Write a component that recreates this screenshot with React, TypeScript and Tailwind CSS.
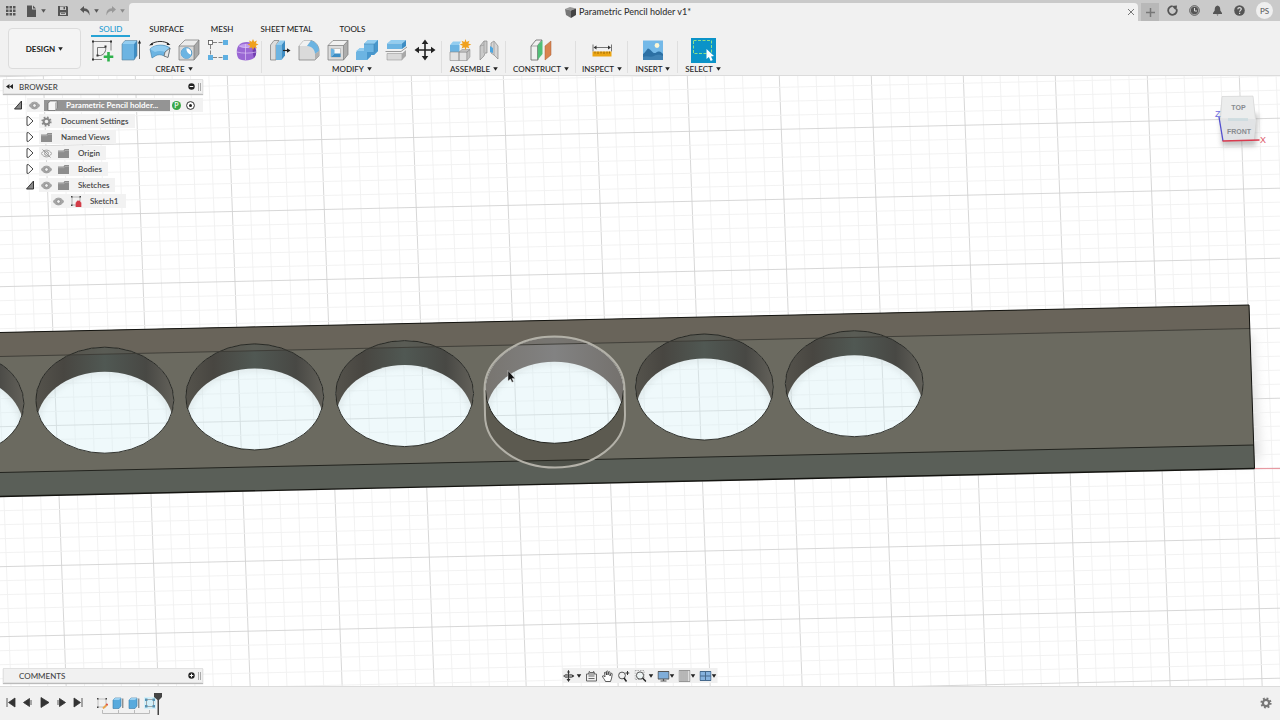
import { useState, type ReactNode } from "react";

const tabs = ["SOLID", "SURFACE", "MESH", "SHEET METAL", "TOOLS"];

function Icon({ children, className = "w-6 h-6", box = 24 }: { children: ReactNode; className?: string; box?: number }) {
  return (
    <svg viewBox={`0 0 ${box} ${box}`} className={`shrink-0 ${className}`} fill="none" aria-hidden="true">
      {children}
    </svg>
  );
}

function Caret({ className = "text-[#222]" }: { className?: string }) {
  return (
    <svg viewBox="0 0 5 4" className={`w-[5px] h-1 shrink-0 ${className}`} aria-hidden="true">
      <path d="M0.2 0.3h4.6L2.5 3.8z" fill="currentColor" />
    </svg>
  );
}

function Gear({ className }: { className: string }) {
  return (
    <Icon className={className} box={12}>
      <circle cx="6" cy="6" r="3.100" stroke="currentColor" strokeWidth="2.200" />
      <circle cx="6" cy="6" r="4.600" stroke="currentColor" strokeWidth="2" strokeDasharray="1.806 1.806" />
    </Icon>
  );
}

const BLUE = "#6cb4e2";
const DEEP = "#3d8dc4";
const LIGHT = "#93cdf0";

const icons: Record<string, ReactNode> = {
  sketch: (
    <Icon>
      <path d="M3 3.5h18M3 3.5v18M21 3.5v9M3 21.500h9" stroke="#666" strokeWidth="0.8" />
      <path d="M7.500 17.500v-8h8M7.500 17.500h3c4-1 6-5 5-9" stroke="#555" strokeWidth="0.8" />
      <path d="M2 2.500h2v2H2zM20 2.500h2v2h-2zM2 20.500h2v2H2zM6.500 16.500h2v2h-2zM14.500 7.500h2v2h-2z" fill="#333" />
      <path d="M18.500 14v9.500M13.700 18.700h9.600" stroke="#2fb24c" strokeWidth="2.600" />
    </Icon>
  ),
  extrude: (
    <Icon>
      <path d="M3 6l3-3.500h12l-3 3.500z" fill={LIGHT} />
      <path d="M15 6l3-3.500v15L15 22z" fill={DEEP} />
      <path d="M3 6h12v16H3z" fill={BLUE} />
      <path d="M3 22V6l3-3.500h12v15L15 22z" stroke="#5b7f99" strokeWidth="0.600" />
      <path d="M20.500 21V4" stroke="#555" strokeWidth="0.900" />
      <path d="M20.500 2L19 5.500h3z" fill="#222" />
    </Icon>
  ),
  revolve: (
    <Icon>
      <path d="M2 11C7 6 17 6 22 10l-2 9-5-1.500c-2-1-5-1-7 0L4 20z" fill={BLUE} stroke="#3b7ca8" strokeWidth="0.600" />
      <path d="M2 11c5-4.500 15-4.500 19.500-.5L17 14c-3-1.500-7-1.500-10 0z" fill={LIGHT} />
      <path d="M17 14l5-4-2 9.500-4-1.500z" fill="#e6e6e6" stroke="#555" strokeWidth="0.700" />
      <path d="M2.500 6.500C8 2.500 16 2.500 21 6" stroke="#333" strokeWidth="1" />
      <path d="M1 7.500l3.500-3 .5 2.500zM22.500 7l-3.500-2.500-.2 2.400z" fill="#222" />
    </Icon>
  ),
  hole: (
    <Icon>
      <path d="M2 8l6-6h14l-5 6z" fill="#ececec" />
      <path d="M17 8l5-6v14l-5 6z" fill="#a9a9a9" />
      <path d="M2 8h15v14H2z" fill="#d8d8d8" />
      <path d="M2 22V8l6-6h14v14l-5 6zM2 8h15v14M17 8l5-6" stroke="#777" strokeWidth="0.700" />
      <circle cx="9.500" cy="15" r="5.300" fill="#fff" stroke="#3d8dc4" strokeWidth="0.900" />
      <path d="M9.500 9.700a5.300 5.300 0 1 0 5 7c-3-.5-5.500-3-5-7z" fill={BLUE} />
    </Icon>
  ),
  pattern: (
    <Icon>
      <path d="M4.500 7v10M7 4.500h10M7 19.500h10" stroke="#777" strokeWidth="0.900" strokeDasharray="4 1.500" />
      <rect x="2.500" y="2.500" width="4" height="4" fill="#fff" stroke="#555" strokeWidth="0.800" />
      <path d="M17 2h5v5h-5zM2 17h5v5H2zM17 17h5v5h-5z" fill="#5fb0e2" />
    </Icon>
  ),
  form: (
    <Icon>
      <path d="M4 7c3-4 13-4 15 0 3 3 3 9 0 13-3 3-12 3-15 1C1 18 1 10 4 7z" fill="#9a67d4" />
      <path d="M4 8c3-3 12-3 14 0-3 2-10 3-14 0z" fill="#c19bee" />
      <path d="M18 8c4 3 4 9 1 12-1-3-2-9-1-12z" fill="#713db0" />
      <path d="M2 14c5 1.500 13 1.500 19 0M10.500 6v16M4 8c4 2 10 2 14 0" stroke="#dcc6f5" strokeWidth="0.700" />
      <path d="M18 1l1.200 2.800L22 2.500 20.800 5.300 23.500 6.500l-2.700 1.200L22 10.500l-2.800-1.200L18 12l-1.200-2.700L14 10.500l1.200-2.800L12.500 6.500l2.700-1.200L14 2.500l2.800 1.300z" fill="#f0a11e" />
    </Icon>
  ),
  pressPull: (
    <Icon>
      <path d="M2.500 7L6 2.500h5L8 7v15H2.500z" fill="#ddd" stroke="#777" strokeWidth="0.700" />
      <path d="M8 7l4-4.500h5L13.500 7z" fill={LIGHT} />
      <path d="M8 7h5.500v15H8z" fill={BLUE} />
      <path d="M13.500 7L17 2.500v15L13.500 22z" fill={DEEP} />
      <path d="M15 12.500h5" stroke="#222" strokeWidth="1.200" />
      <path d="M19 10.300l3.500 2.200-3.500 2.200z" fill="#222" />
    </Icon>
  ),
  fillet: (
    <Icon>
      <path d="M2 8l5-5.500h7C19 4 22 8 22 13v5l-4 4H2z" fill="#dadada" stroke="#777" strokeWidth="0.700" />
      <path d="M2 8h8l4-5.500H7z" fill="#f1f1f1" />
      <path d="M10 8l4-5.500C19 4 22 8 22 13l-4 3c0-4-3-8-8-8z" fill={BLUE} />
      <path d="M18 16l4-3v5l-4 4z" fill="#b0b0b0" />
    </Icon>
  ),
  shell: (
    <Icon>
      <path d="M2 7.500L7 2.500h15l-4.500 5z" fill="#f1f1f1" />
      <path d="M17.500 7.500l4.500-5v14L17.500 22z" fill="#adadad" />
      <path d="M2 7.500h15.500V22H2z" fill="#dcdcdc" />
      <path d="M2 22V7.500l5-5h15v14L17.500 22zM2 7.500h15.500V22M17.500 7.500l4.500-5" stroke="#777" strokeWidth="0.700" />
      <path d="M5 10.500h9.500V19H5z" fill="#f9f9f9" stroke="#999" strokeWidth="0.500" />
      <path d="M5 10.500l3.500 1V15.500L5 19z" fill={BLUE} />
      <path d="M5 19l3.500-3.500h6V19z" fill={DEEP} />
    </Icon>
  ),
  combine: (
    <Icon>
      <path d="M9 6l4-4h10v11l-4 4H9z" fill={BLUE} />
      <path d="M1 14l4-4h11v8l-4 4H1z" fill={BLUE} />
      <path d="M9 6l4-4h10l-4 4zM1 13l4-3h4v3z" fill={LIGHT} />
      <path d="M19 6l4-4v11l-4 4h-3v1l-4 4v-8h7z" fill="#4997cc" />
      <path d="M9 6h10v8" stroke="#3b7ca8" strokeWidth="0.500" />
    </Icon>
  ),
  split: (
    <Icon>
      <path d="M3 5.500L7 2h15l-4 3.500z" fill={LIGHT} />
      <path d="M3 5.500h15V11H3z" fill={BLUE} />
      <path d="M18 5.500L22 2v6l-4 3z" fill={DEEP} />
      <path d="M3 15.500h15V22H3z" fill="#d9d9d9" stroke="#888" strokeWidth="0.500" />
      <path d="M18 15.500l4-3.500v6L18 22z" fill="#a9a9a9" />
      <path d="M1.500 13.500h15.500l6-4.500" stroke="#999" strokeWidth="1" />
    </Icon>
  ),
  move: (
    <Icon>
      <path d="M12 4v16M4 12h16" stroke="#222" strokeWidth="1.600" />
      <path d="M12 1.500L15.300 6H8.700zM12 22.500l3.300-4.500H8.700zM1.500 12L6 8.700v6.600zM22.500 12L18 8.700v6.600z" fill="#222" />
    </Icon>
  ),
  component: (
    <Icon>
      <path d="M2 7l3-3.500h8L11 7z" fill={LIGHT} />
      <path d="M2 7h9.500v7H2z" fill={BLUE} />
      <path d="M2 14h9v8.500H2zM11 14h8v8.500h-8z" fill="#e3e3e3" stroke="#888" strokeWidth="0.600" />
      <path d="M11 14l3-2.500h8L19 14zM19 14l3-2.500V19l-3 3.500z" fill="#c2c2c2" stroke="#888" strokeWidth="0.500" />
      <path d="M17.500 1l1 3L21.500 2.800 20.300 5.500l3 1-3 1.200 1.200 2.800-3-1.200-1 3-1-3-3 1.200 1.200-2.800-3-1.200 3-1-1.200-2.700 3 1.200z" fill="#f0a11e" />
    </Icon>
  ),
  joint: (
    <Icon>
      <path d="M3 8l4-5h3v12H8l-1 3-4 4z" fill="#c9c9c9" stroke="#888" strokeWidth="0.700" />
      <path d="M7 3v12M3 8l4-1" stroke="#999" strokeWidth="0.700" />
      <path d="M21 8l-4-5-3 2v10l3 2 4 4z" fill="#d5d5d5" stroke="#888" strokeWidth="0.700" />
      <path d="M13 8l3 2v5l-3-1z" fill="#4fa6df" />
      <path d="M17 4v13" stroke="#999" strokeWidth="0.700" />
    </Icon>
  ),
  plane: (
    <Icon>
      <path d="M2 8l5-6h6l-4 5v15H2z" fill="#f0f0f0" stroke="#666" strokeWidth="0.800" />
      <path d="M8.500 7.500L13.500 2v14l-5 6z" fill="#51bf77" />
      <path d="M2 8h6.500v14" stroke="#777" strokeWidth="0.600" />
      <path d="M16 8l6-5v14l-6 5z" fill="#d9834f" stroke="#a75e34" strokeWidth="0.500" />
    </Icon>
  ),
  ruler: (
    <Icon>
      <path d="M3 6.500v7M21.500 6.500v7M5 9.500h15" stroke="#555" strokeWidth="0.800" />
      <path d="M3.500 9.500l3-2v4zM21 9.500l-3-2v4z" fill="#333" />
      <path d="M2.500 13.500h19v5h-19z" fill="#eba513" />
      <path d="M5 13.500v2M8 13.500v2.500M11 13.500v2M14 13.500v2.500M17 13.500v2M19.500 13.500v2" stroke="#8a5a00" strokeWidth="0.800" />
    </Icon>
  ),
  picture: (
    <Icon>
      <path d="M2 2.500h20v19.500H2z" fill="#74b9e8" />
      <path d="M2 16c2-1 4-5 5-5.500 2 0 4 4 6 4.500 2 .5 3-2 5-1.500 2 0 3 1.500 4 2.500v6H2z" fill="#2c70a4" />
      <path d="M2 19c4-2 7 1 11-1s6-1 9 0v4H2z" fill="#3f82b4" />
      <circle cx="16" cy="7.500" r="2.400" fill="#fdf6d4" />
    </Icon>
  ),
  select: (
    <Icon className="w-[25px] h-[25px]" box={25}>
      <path d="M0 0h25v25H0z" fill="#0b93c8" />
      <path d="M2.500 2.500h18v13h-18z" stroke="#8ce08a" strokeWidth="1" strokeDasharray="3 1.500" />
      <path d="M15.500 11l0 10 2.400-2 1.800 4 2-.9-1.700-3.700 3-.3z" fill="#fff" />
    </Icon>
  ),
};

const groups = [
  { label: "CREATE", width: "w-44", tools: ["sketch", "extrude", "revolve", "hole", "pattern", "form"] },
  { label: "MODIFY", width: "w-[180px]", tools: ["pressPull", "fillet", "shell", "combine", "split", "move"] },
  { label: "ASSEMBLE", width: "w-16", tools: ["component", "joint"] },
  { label: "CONSTRUCT", width: "w-[70px]", tools: ["plane"] },
  { label: "INSPECT", width: "w-[52px]", tools: ["ruler"] },
  { label: "INSERT", width: "w-[50px]", tools: ["picture"] },
  { label: "SELECT", width: "w-[50px]", tools: ["select"] },
];

function TitleBar() {
  return (
    <header className="flex h-[21px] shrink-0 items-end bg-[#cacaca] text-[#555]">
      <div className="flex h-full w-[129px] items-center pl-[5px]">
        <button aria-label="Data panel" className="w-5">
          <Icon className="w-[11px] h-[11px]" box={11}>
            <path d="M1 1h2.500v2.500H1zM4.500 1H7v2.500H4.500zM8 1h2.500v2.500H8zM1 4.500h2.500V7H1zM4.500 4.500H7V7H4.500zM8 4.500h2.500V7H8zM1 8h2.500v2.500H1zM4.500 8H7v2.500H4.500zM8 8h2.500v2.500H8z" fill="currentColor" />
          </Icon>
        </button>
        <button aria-label="File" className="flex w-8 items-center gap-1">
          <Icon className="w-3 h-3" box={12}>
            <path d="M2 .5h5v4h4V12H2zM8 .5l3 3H8z" fill="currentColor" />
          </Icon>
          <Caret className="text-[#555]" />
        </button>
        <button aria-label="Save" className="w-[22px]">
          <Icon className="w-3 h-3" box={12}>
            <path d="M1 1h9l1 1v9H1z" fill="currentColor" />
            <path d="M3 1.500h6V5H3zM3 7.500h6V10H3z" fill="#cacaca" />
            <path d="M6.500 2h1.500v2.300H6.500zM4 8.200h4v.8H4z" fill="currentColor" />
          </Icon>
        </button>
        <button aria-label="Undo" className="flex w-[26px] items-center gap-[3px]">
          <Icon className="w-3 h-3" box={12}>
            <path d="M1 4.500L5 1v2.300c4 0 6 3 5.500 7.200C9.500 7.500 8 6 5 6v2z" fill="currentColor" />
          </Icon>
          <Caret className="text-[#555]" />
        </button>
        <button aria-label="Redo" className="flex items-center gap-[3px] text-[#999]">
          <Icon className="w-3 h-3" box={12}>
            <path d="M11 4.500L7 1v2.300C3 3.300 1 6.300 1.500 10.500 2.500 7.500 4 6 7 6v2z" fill="currentColor" />
          </Icon>
          <Caret className="text-[#888]" />
        </button>
      </div>
      <div className="flex h-[18px] flex-1 items-center rounded-t-sm bg-[#f1f1f1] pr-[3px]">
        <div className="flex flex-1 items-center justify-center gap-[3px] text-[9px] font-medium text-[#333]">
          <Icon className="w-[11px] h-[11px]" box={11}>
            <path d="M0 2l5-2 6 1.500-5 2z" fill="#999" />
            <path d="M0 2l6 1.500V11L1 8z" fill="#777" />
            <path d="M6 3.500l5-2V8l-5 3z" fill="#444" />
          </Icon>
          <h1>Parametric Pencil holder v1*</h1>
        </div>
        <button aria-label="Close tab">
          <Icon className="w-2 h-2" box={8}>
            <path d="M1 1l6 6M7 1L1 7" stroke="#777" />
          </Icon>
        </button>
      </div>
      <div className="flex h-full w-[142px] items-center pl-[3px]">
        <button aria-label="New tab" className="flex h-[18px] w-[18px] items-center justify-center self-end bg-[#b8b8b8]">
          <Icon className="w-[9px] h-[9px]" box={9}>
            <path d="M4.500 0v9M0 4.500h9" stroke="#777" strokeWidth="1.500" />
          </Icon>
        </button>
        <div className="flex flex-1 items-center justify-between pl-2 pr-[7px]">
          <button aria-label="Extensions">
            <Icon className="w-[11px] h-[11px]" box={11}>
              <path d="M5.500 1.200a4.300 4.300 0 1 0 4 2.800" stroke="currentColor" strokeWidth="1.800" />
              <path d="M5 1l5-.5-.5 4.500L7.500 4z" fill="currentColor" />
            </Icon>
          </button>
          <button aria-label="Job status">
            <Icon className="w-[11px] h-[11px]" box={11}>
              <circle cx="5.500" cy="5.500" r="4.800" stroke="currentColor" />
              <circle cx="5.500" cy="5.500" r="3.700" fill="currentColor" />
              <path d="M5.500 3v3H8" stroke="#ddd" strokeWidth="1" />
            </Icon>
          </button>
          <button aria-label="Notifications">
            <Icon className="w-[11px] h-[11px]" box={11}>
              <path d="M5.500 0.500C3 1 2.700 3 2.700 5.500L1 8v1h9V8L8.300 5.500C8.300 3 8 1 5.500.5zM4.500 9.500h2l-1 1.300z" fill="currentColor" />
            </Icon>
          </button>
          <button aria-label="Help">
            <Icon className="w-[11px] h-[11px]" box={11}>
              <circle cx="5.500" cy="5.500" r="5.300" fill="currentColor" />
              <path d="M3.800 4.300c0-2.300 3.500-2.300 3.500-.2 0 1.200-1.700 1.400-1.700 2.700M5.600 7.800v1.200" stroke="#ddd" strokeWidth="1.200" />
            </Icon>
          </button>
          <button className="h-[17px] w-[17px] shrink-0 rounded-full bg-[#efefef] text-[8px] text-[#555]">PS</button>
        </div>
      </div>
    </header>
  );
}

function Toolbar() {
  const [active, setActive] = useState("SOLID");
  return (
    <div className="flex shrink-0 border-b border-[#dcdcdc] bg-[#f1f1f1] text-[8px] font-medium text-[#222]">
      <button className="mt-[7px] mb-1.5 ml-2 flex w-[73px] items-center justify-center gap-[3px] rounded-sm border border-[#dcdcdc] bg-[#f4f4f4] font-bold text-[#222]">
        DESIGN <Caret />
      </button>
      <div className="ml-[5px]">
        <nav className="ml-[5px] flex gap-[11px]">
          {tabs.map((t) => (
            <button
              key={t}
              onClick={() => setActive(t)}
              className={`h-4 border-b-2 px-2 leading-4 ${
                t === active ? "border-[#27a3d5] text-[#1d9bd1]" : "border-transparent"
              }`}
            >
              {t}
            </button>
          ))}
        </nav>
        <div className="flex">
          {groups.map((g) => (
            <div key={g.label} className={`relative ${g.width}`}>
              <div className="flex h-[26px] items-center justify-center">
                {g.tools.map((t) => (
                  <button key={t} aria-label={t} className="flex w-[29px] justify-center">
                    {icons[t]}
                  </button>
                ))}
              </div>
              <button className="flex h-3 w-full items-center justify-center gap-[3px] leading-3">
                {g.label} <Caret />
              </button>
              {g.label !== "SELECT" && <div className="absolute top-1 right-0 bottom-0.5 w-px bg-[#dfdfdf]" />}
            </div>
          ))}
        </div>
      </div>
    </div>
  );
}

// Ground grid: 92 x 70 cells, each cut in five
const MAJOR_X = 92;
const MAJOR_Y = 70;

function Grid() {
  const lines: ReactNode[] = [];
  for (let i = -10; i <= 75; i++) {
    const x = 43.3 + (i * MAJOR_X) / 5;
    lines.push(
      <path key={`v${i}`} d={`M${x} 76L${x + 23} 690`} stroke={i % 5 === 0 ? "#d2d2d2" : "#f0f0f0"} />
    );
  }
  for (let i = -6; i <= 45; i++) {
    const y = 146.7 + (i * MAJOR_Y) / 5;
    lines.push(
      <path key={`h${i}`} d={`M0 ${y}L1280 ${y - 28.5}`} stroke={i % 5 === 0 ? "#d2d2d2" : "#f0f0f0"} />
    );
  }
  return <g strokeWidth="0.9">{lines}</g>;
}

const holes = [-1, 0, 1, 2, 3, 4, 5].map((k) => ({ k, x: 104.8 + k * 149.9, y: 400.2 - k * 3.3 }));

function Scene() {
  return (
    <svg viewBox="0 76 1280 610" preserveAspectRatio="xMidYMid slice" className="absolute inset-0 h-full w-full">
      <defs>
        <linearGradient id="wall">
          <stop offset="0" stopColor="#55534c" />
          <stop offset="0.2" stopColor="#484641" />
          <stop offset="0.5" stopColor="#505853" />
          <stop offset="0.8" stopColor="#484844" />
          <stop offset="1" stopColor="#63615a" />
        </linearGradient>
        <linearGradient id="hotWall">
          <stop offset="0" stopColor="#787570" />
          <stop offset="0.5" stopColor="#828282" />
          <stop offset="1" stopColor="#74716d" />
        </linearGradient>
        <filter id="soft" x="-50%" y="-20%" width="200%" height="140%">
          <feGaussianBlur stdDeviation="6" />
        </filter>
        <filter id="inner">
          <feGaussianBlur stdDeviation="3" />
        </filter>
        {holes.map((h) => (
          <clipPath id={`near${h.k}`} key={h.k}>
            <ellipse cx={h.x} cy={h.y} rx="69" ry="53" />
          </clipPath>
        ))}
        {holes.map((h) => (
          <mask id={`wallMask${h.k}`} key={h.k} maskUnits="userSpaceOnUse" x={h.x - 80} y={h.y - 70} width="160" height="160">
            <ellipse cx={h.x} cy={h.y} rx="69" ry="53" fill="#fff" />
            <ellipse cx={h.x} cy={h.y + 24.5} rx="68.500" ry="53" fill="#000" />
          </mask>
        ))}
        <mask id="body" maskUnits="userSpaceOnUse" x="-100" y="280" width="1400" height="240">
          <path d="M-50 280h1400v240h-1400z" fill="#fff" />
          {holes.map((h) => (
            <ellipse key={h.k} cx={h.x} cy={h.y} rx="69" ry="53" fill="#000" />
          ))}
        </mask>
      </defs>
      <path d="M0 76h1280v614H0z" fill="#fff" />
      <path d="M1200 335h52l8 125-60 4z" fill="#bbb" opacity="0.5" filter="url(#soft)" />
      <Grid />
      <path d="M1254 468.500h26" stroke="#e79aa2" strokeWidth="1.200" />

      <g mask="url(#body)">
        <path d="M0 332.500L1249 305l5.500 163.500L0 496.500z" fill="#6b6a60" />
        <path d="M0 332.500L1249 305l1 23.500L0 356.500z" fill="#69655b" />
        <path d="M0 472.500L1254 445l.5 23.500L0 496.500z" fill="#5a5f58" />
        <path d="M0 472.500L1254 445" stroke="#23241f" />
      </g>

      {holes.map((h) => (
        <g key={h.k}>
          <ellipse cx={h.x} cy={h.y} rx="69" ry="53" fill="#d6eff5" opacity="0.4" />
          <g clipPath={`url(#near${h.k})`}>
            <ellipse cx={h.x} cy={h.y + 24.5} rx="68" ry="53" stroke="#a3adab" strokeWidth="3" fill="none" opacity="0.4" filter="url(#inner)" />
          </g>
          <path
            d={`M${h.x - 69} ${h.y - 54}h138v80h-138z`}
            fill={h.k === 3 ? "url(#hotWall)" : "url(#wall)"}
            mask={`url(#wallMask${h.k})`}
          />
        </g>
      ))}

      {/* upper bevel shows through the hole walls */}
      <path d="M0 332.500L1249 305l1 23.500L0 356.500z" fill="#69655b" opacity="0.4" />
      {holes.map((h) => (
        h.k !== 3 && <ellipse key={h.k} cx={h.x} cy={h.y} rx="69" ry="53" stroke="#20211d" strokeWidth="0.9" fill="none" />
      ))}
      <path d="M0 356.500L1250 328.500" stroke="#3c3b35" strokeWidth="0.9" />
      <path d="M0 332.500L1249 305l5.500 163.500" stroke="#141410" fill="none" />
      <path d="M0 496.500L1254.500 468.500" stroke="#141410" strokeWidth="1.400" />

      {/* hovered hole */}
      <path
        d="M485.500 390.300A69 53 0 0 0 623.500 390.300L625 415A70 52.500 0 0 1 485 415z"
        fill="#2f2a1e"
        fillOpacity="0.25"
      />
      <path d="M485.500 390.300A69 53 0 0 0 623.500 390.300" stroke="#23241f" fill="none" />
      <path d="M484.500 389a70 52.500 0 0 1 140 0l.5 26a70 52.500 0 0 1-140 0z" stroke="#b3b1a8" strokeWidth="2" fill="none" />
      <path d="M508 370.500v10.500l2.500-2 1.500 3.300 1.500-.7-1.500-3.200h3z" fill="#111" stroke="#ddd" strokeWidth="0.500" />
    </svg>
  );
}

function ViewCube() {
  return (
    <svg viewBox="0 0 70 64" className="absolute top-4 right-1 h-16 w-[70px]" aria-label="View cube">
      <defs>
        <filter id="cubeShadow" x="-30%" y="-30%" width="160%" height="160%">
          <feGaussianBlur stdDeviation="2.5" />
        </filter>
      </defs>
      <path d="M14 22h38l-2 32H16z" fill="#888" opacity="0.5" filter="url(#cubeShadow)" />
      <path d="M16 4.500L47 4l3 23-2 20.500-31 1.500-4-22z" fill="#e3e5e6" />
      <path d="M16 4.500L47 4l2.500 23.500-35-.5z" fill="#eceded" stroke="#ccc" strokeWidth="0.500" />
      <path d="M14.500 27h35l-2 20.500-30.500 1z" fill="#e1e3e5" />
      <path d="M22 27.500h20" stroke="#c8dade" strokeWidth="3" opacity="0.7" />
      <path d="M13 25l4 24" stroke="#5350cf" strokeWidth="1.300" />
      <path d="M16.500 49l37-1" stroke="#d93a4e" strokeWidth="1.300" />
      <g className="font-['Liberation_Sans'] font-bold" fill="#888c90" textAnchor="middle">
        <text x="32.500" y="17.500" className="text-[7px]">TOP</text>
        <text x="33" y="41.500" className="text-[7px]">FRONT</text>
      </g>
      <text x="9" y="25" className="font-['Liberation_Sans'] text-[9px]" fill="#6e6ce0">Z</text>
      <text x="54" y="51" className="font-['Liberation_Sans'] text-[9px]" fill="#de5568">X</text>
    </svg>
  );
}

function Eye({ off = false }: { off?: boolean }) {
  return (
    <Icon className="w-[11px] h-[11px]" box={11}>
      <path d="M.3 5.500C3 1 8 1 10.700 5.500 8 10 3 10 .3 5.500z" fill={off ? "none" : "#a5a5a5"} stroke="#999" strokeWidth="0.900" />
      <circle cx="5.500" cy="5.500" r="1.900" fill={off ? "none" : "#eee"} stroke="#888" strokeWidth="0.900" />
      {off && <path d="M1.500 1.500l8 8" stroke="#999" />}
    </Icon>
  );
}

function Folder() {
  return (
    <Icon className="w-[11px] h-[11px]" box={11}>
      <path d="M0 2.500h5.500l1-1.500H11v9H0z" fill="#8d8d8d" />
      <path d="M0 3.700h6l1-1.200h4" stroke="#bbb" strokeWidth="0.600" />
    </Icon>
  );
}

function Toggle({ open }: { open: boolean }) {
  return (
    <Icon className="w-2.5 h-2.5" box={10}>
      {open ? (
        <path d="M8.500 1v8h-7z" fill="#888" stroke="#333" />
      ) : (
        <path d="M2 .7h1.500L8 5 3.500 9.300H2z" fill="#fff" stroke="#444" />
      )}
    </Icon>
  );
}

const tree = [
  { label: "Document Settings", icon: "gear" },
  { label: "Named Views", icon: "folder" },
  { label: "Origin", icon: "folder", eye: "off" },
  { label: "Bodies", icon: "folder", eye: "on" },
  { label: "Sketches", icon: "folder", eye: "on", open: true },
];

function PanelHeader({ title, open }: { title: string; open: boolean }) {
  return (
    <div className="flex h-[15px] items-center border border-[#e2e2e2] bg-[#f1f1f1] text-[8px] font-medium text-[#444] shadow-[0_1px_1px_#bbb]">
      <div className="flex w-[15px] items-center">
        {open && (
          <Icon className="ml-0.5 w-[7px] h-[7px]" box={7}>
            <path d="M3.500 1v5L0 3.500zM7 1v5L3.500 3.500z" fill="#222" />
          </Icon>
        )}
      </div>
      <h2 className="flex-1">{title}</h2>
      <button aria-label={open ? "Collapse panel" : "Add comment"} className="mr-[3px]">
        <Icon className="w-[7px] h-[7px]" box={7}>
          <circle cx="3.500" cy="3.500" r="3.200" fill="#222" />
          <path d={open ? "M1.700 3.500h3.600" : "M1.700 3.500h3.600M3.500 1.700v3.600"} stroke="#fff" />
        </Icon>
      </button>
      <div className="mr-px h-2 w-[3px] border-x border-[#aaa]" />
    </div>
  );
}

function Browser() {
  return (
    <aside className="absolute top-[3px] left-[3px] w-[200px] text-[8px] font-semibold text-[#444]">
      <PanelHeader title="BROWSER" open />
      <ul className="mt-[3px]">
        <li className="flex h-4 items-center pl-2.5">
          <Toggle open />
          <div className="ml-1 flex h-[14px] flex-1 items-center bg-[#f2f2f2] pl-0.5">
            <Eye />
            <div className="ml-1 flex h-[11px] w-[126px] items-center gap-2 bg-[#949494] pl-[3px] whitespace-nowrap text-white">
              <Icon className="w-[11px] h-[11px]" box={11}>
                <path d="M1 3l2.500-2H10v7l-2 2.500H1z" fill="#f6f6f6" stroke="#666" strokeWidth="0.700" />
                <path d="M8 3l2-2v7l-2 2.500z" fill="#bbb" />
              </Icon>
              <span className="font-bold">Parametric Pencil holder...</span>
            </div>
            <span className="ml-0.5 flex h-[9px] w-[9px] items-center justify-center rounded-full bg-[#3ba648] text-[7px] leading-none text-white">P</span>
            <Icon className="ml-[5px] w-[9px] h-[9px]" box={9}>
              <circle cx="4.500" cy="4.500" r="3.900" stroke="#333" fill="#fff" />
              <circle cx="4.500" cy="4.500" r="1.500" fill="#222" />
            </Icon>
          </div>
        </li>
        {tree.map((n) => (
          <li key={n.label} className="flex h-4 items-center pl-[22px]">
            <Toggle open={!!n.open} />
            <div className="ml-1 flex h-[14px] items-center bg-[#f2f2f2] pr-1.5 pl-0.5">
              {n.eye && (
                <span className="mr-1.5 flex">
                  <Eye off={n.eye === "off"} />
                </span>
              )}
              {n.icon === "gear" ? <Gear className="h-[11px] w-[11px] text-[#8a8a8a]" /> : <Folder />}
              <span className="ml-[9px]">{n.label}</span>
            </div>
          </li>
        ))}
        <li className="flex h-4 items-center pl-12">
          <div className="flex h-[14px] items-center bg-[#f2f2f2] pr-2 pl-0.5">
            <Eye />
            <Icon className="ml-1.5 w-3 h-3" box={12}>
              <path d="M2 2h8M2 2v8M10 2v4M2 10h4" stroke="#888" strokeWidth="0.600" />
              <path d="M1 1h1.500v1.500H1zM9.500 1H11v1.500H9.500zM1 9.500h1.500V11H1z" fill="#444" />
              <path d="M6 7.500h5V12H6zM7 7.500V6h3v1.500" fill="#d33c48" stroke="#d33c48" strokeWidth="0.700" />
            </Icon>
            <span className="ml-2">Sketch1</span>
          </div>
        </li>
      </ul>
    </aside>
  );
}

function NavBar() {
  return (
    <div className="absolute bottom-[3px] left-1/2 flex h-[15px] w-[155px] -translate-x-1/2 items-center justify-between bg-[#f0f0f0] pr-px">
      <button aria-label="Orbit" className="flex items-center gap-0.5">
        <Icon className="w-3 h-3" box={12}>
          <path d="M6 .5v10M1 6h10" stroke="#333" />
          <ellipse cx="6" cy="6" rx="4.500" ry="1.800" stroke="#555" strokeWidth="0.800" />
          <path d="M6 0l1.500 2.500h-3zM6 12l-2-3h4zM12 6L9.500 4.500v3z" fill="#333" />
        </Icon>
        <Caret />
      </button>
      <button aria-label="Look at">
        <Icon className="w-3 h-3" box={12}>
          <path d="M1 4h10v7H1zM3 4l1-3M9 4L8 1M4 2.500h5" stroke="#666" />
          <path d="M3 6h6M3 8.500h6" stroke="#666" />
        </Icon>
      </button>
      <button aria-label="Pan">
        <Icon className="w-3 h-3" box={12}>
          <path d="M4 11.500C3 9 1 7.500 1 6c1-.7 2 .3 2.500 1L3 2.500c.7-.8 1.300-.3 1.500.5l.5 2V1.500c.4-.9 1.300-.8 1.500 0V5L7.200 2c.5-.6 1.300-.4 1.300.4V6l1-2.500c.7-.5 1.300 0 1.200.6C10.400 7 10 9.500 9 11.500z" fill="#fff" stroke="#333" strokeWidth="0.800" />
        </Icon>
      </button>
      <button aria-label="Zoom">
        <Icon className="w-3 h-3" box={12}>
          <circle cx="4.500" cy="5.500" r="3.400" stroke="#555" />
          <path d="M6.500 8L9 11.500" stroke="#222" strokeWidth="1.500" />
          <path d="M10 1v4M8 3h4" stroke="#333" />
        </Icon>
      </button>
      <button aria-label="Fit" className="flex items-center gap-0.5">
        <Icon className="w-3 h-3" box={12}>
          <path d="M.5.500h9v9h-9z" stroke="#aaa" strokeDasharray="1.500 1" />
          <circle cx="5.500" cy="5.500" r="3.600" fill="#edf3f3" stroke="#555" />
          <path d="M8 8l3.500 3.500" stroke="#222" strokeWidth="1.500" />
        </Icon>
        <Caret />
      </button>
      <button aria-label="Display settings" className="flex items-center">
        <Icon className="w-3 h-3" box={12}>
          <path d="M.5 1.500h11v7.500H.5z" fill="#7fadd9" stroke="#555" />
          <path d="M3 11h6M6 9v2" stroke="#555" strokeWidth="1.200" />
        </Icon>
        <Caret />
      </button>
      <button aria-label="Grid settings" className="flex items-center">
        <Icon className="w-3 h-3" box={12}>
          <path d="M.5.500h11v11H.5z" fill="#ddd" stroke="#888" strokeWidth="0.800" />
          <path d="M2.500.5v11M4.500.5v11M6.500.5v11M8.500.5v11" stroke="#888" strokeWidth="0.900" />
        </Icon>
        <Caret />
      </button>
      <button aria-label="Viewports" className="flex items-center">
        <Icon className="w-3 h-3" box={12}>
          <path d="M.5 1.500h11v9H.5z" fill="#86b2de" stroke="#46698c" />
          <path d="M6 2v8.500M.5 6h11" stroke="#46698c" />
        </Icon>
        <Caret />
      </button>
    </div>
  );
}

const playback = [
  { label: "Go to start", d: "M2 1v9M10 1L3.500 5.500 10 10z" },
  { label: "Step back", d: "M7.500 1.500L1.500 5.500l6 4zM9 3v5" },
  { label: "Play", d: "M2 .5l8 5-8 5z" },
  { label: "Step forward", d: "M3.500 1.500l6 4-6 4zM2 3v5" },
  { label: "Go to end", d: "M9 1v9M1 1l6.500 4.500L1 10z" },
];

function Solid() {
  return (
    <Icon className="w-3 h-3" box={12}>
      <path d="M1 3l2-2h6v8l-2 2.500H1z" fill="#58aadd" stroke="#3878a6" strokeWidth="0.600" />
      <path d="M1 3l2-2h6L7 3z" fill="#9bd0f0" />
      <path d="M10.800 11V1.500" stroke="#444" strokeWidth="0.800" />
    </Icon>
  );
}

function Timeline() {
  return (
    <footer className="flex h-[34px] shrink-0 items-center justify-between border-t border-[#dcdcdc] bg-[#f1f1f1] px-[5px] pb-0.5">
      <div className="flex items-center">
        <div className="flex w-[91px] items-center gap-[5px]">
          {playback.map((p) => (
            <button key={p.label} aria-label={p.label}>
              <Icon className="w-3 h-3" box={12}>
                <path d={p.d} fill="#333" stroke="#333" strokeWidth="0.800" />
              </Icon>
            </button>
          ))}
        </div>
        <div className="relative flex items-center gap-1">
          <Icon className="w-3 h-3" box={12}>
            <path d="M2 2h8v8H2z" stroke="#aaa" strokeWidth="0.700" />
            <path d="M1 1h1.500v1.500H1zM9.500 1H11v1.500H9.500zM1 9.500h1.500V11H1z" fill="#444" />
            <path d="M7 11.500l4-4" stroke="#eba34c" strokeWidth="1.800" />
            <path d="M10.500 8l1-1" stroke="#d44" strokeWidth="1.800" />
          </Icon>
          <Solid />
          <Solid />
          <Icon className="w-3 h-3" box={12}>
            <path d="M0 0h12v12H0z" fill="#d3eff8" />
            <path d="M2.500 2.500h7v7h-7z" stroke="#888" strokeWidth="0.700" />
            <path d="M1 1.500h2.500V4H1zM8.500 1.500H11V4H8.500zM1 8h2.500v2.500H1zM8.500 8H11v2.500H8.500z" fill="#5592b3" />
          </Icon>
          <svg viewBox="0 0 60 24" className="absolute -top-1 left-0 h-6 w-[60px]" fill="none" aria-hidden="true">
            <path d="M6.500 17v3.500h47V17M22.500 17v3.500M38.500 17v3.500" stroke="#bbb" />
          </svg>
          <svg viewBox="0 0 8 22" className="absolute -top-1 left-[58px] h-[22px] w-2" aria-hidden="true">
            <path d="M0 0h8v4L5 7v15H3.500V7L0 4z" fill="#444" />
          </svg>
        </div>
      </div>
      <button aria-label="Preferences" className="mr-[3px]">
        <Gear className="h-3 w-3 text-[#777]" />
      </button>
    </footer>
  );
}

export default function App() {
  return (
    <div className="flex h-screen flex-col overflow-hidden bg-white font-['Lato','Open_Sans',sans-serif]">
      <TitleBar />
      <Toolbar />
      <main className="relative min-h-0 flex-1 overflow-hidden">
        <Scene />
        <Browser />
        <ViewCube />
        <section className="absolute bottom-[3px] left-[3px] w-[200px]">
          <PanelHeader title="COMMENTS" open={false} />
        </section>
        <NavBar />
      </main>
      <Timeline />
    </div>
  );
}
